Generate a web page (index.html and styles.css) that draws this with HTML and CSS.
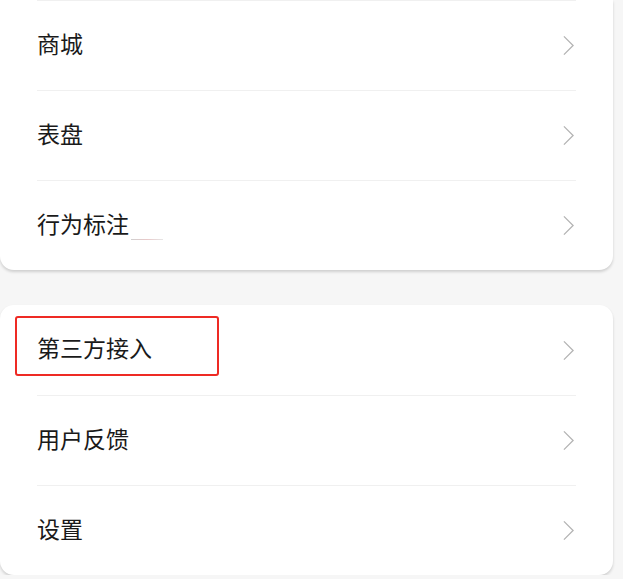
FILE: index.html
```html
<!DOCTYPE html>
<html lang="zh-CN">
<head>
    <meta charset="UTF-8">
    <meta name="viewport" content="width=device-width, initial-scale=1.0">
    <title>我的</title>
    <link rel="stylesheet" href="styles.css">
</head>
<body>
    <div class="page">
        <div class="card card-top">
            <div class="row first">
                <span class="label">商城</span>
                <svg class="chevron" viewBox="0 0 12 22"><path d="M1 1 L11 11 L1 21"/></svg>
            </div>
            <div class="row">
                <span class="label">表盘</span>
                <svg class="chevron" viewBox="0 0 12 22"><path d="M1 1 L11 11 L1 21"/></svg>
            </div>
            <div class="row">
                <span class="label">行为标注<span class="mark"></span></span>
                <svg class="chevron" viewBox="0 0 12 22"><path d="M1 1 L11 11 L1 21"/></svg>
            </div>
        </div>
        <div class="card">
            <div class="row">
                <span class="label">第三方接入</span>
                <svg class="chevron" viewBox="0 0 12 22"><path d="M1 1 L11 11 L1 21"/></svg>
                <div class="highlight"></div>
            </div>
            <div class="row">
                <span class="label">用户反馈</span>
                <svg class="chevron" viewBox="0 0 12 22"><path d="M1 1 L11 11 L1 21"/></svg>
            </div>
            <div class="row">
                <span class="label">设置</span>
                <svg class="chevron" viewBox="0 0 12 22"><path d="M1 1 L11 11 L1 21"/></svg>
            </div>
        </div>
    </div>
</body>
</html>
```
FILE: styles.css
```css
body {
    margin: 0;
    padding: 0;
    background-color: #f6f6f6;
    font-family: "Noto Sans CJK SC", "Noto Sans", sans-serif;
    color: #1a1a1a;
    overflow: hidden;
}
.page {
    display: flex;
    flex-direction: column;
    gap: 35px;
    width: 613px;
}
.card {
    background-color: #ffffff;
    border-radius: 14px;
    box-shadow: 0 2px 3px rgba(0, 0, 0, 0.16);
}
.card-top {
    border-top-left-radius: 0;
    border-top-right-radius: 0;
}
.row {
    position: relative;
    height: 90px;
    margin: 0 37px;
    display: flex;
    align-items: center;
    justify-content: space-between;
    border-top: 1px solid #f0f0f0;
    box-sizing: border-box;
}
.card .row:first-child {
    border-top: none;
}
.card-top .row.first {
    border-top: 1px solid #f0f0f0;
}
.label {
    position: relative;
    top: -3px;
    font-size: 23px;
    line-height: 30px;
}
.mark {
    position: absolute;
    left: 94px;
    top: 31px;
    width: 32px;
    height: 1px;
    background: linear-gradient(to right, #d0d0d0, #e9c9c9, #e6e6e6);
}
.chevron {
    width: 11px;
    height: 21px;
    margin-right: 2px;
    fill: none;
    stroke: #b3b3b3;
    stroke-width: 1.4;
}
.highlight {
    position: absolute;
    left: -22px;
    top: 11px;
    width: 200px;
    height: 56px;
    border: 2px solid #ee2a24;
    border-radius: 3px;
}
```
